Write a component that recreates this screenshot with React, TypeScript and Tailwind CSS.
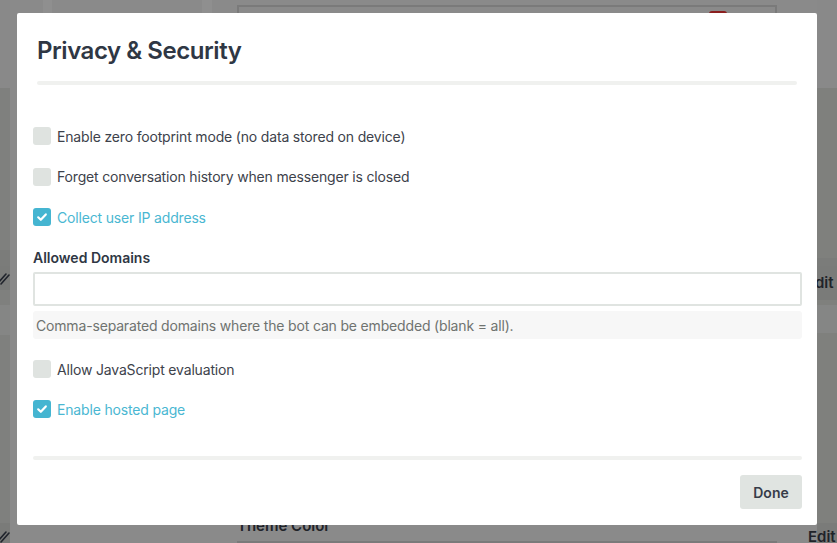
import React from 'react'

type Row = { label: string; checked: boolean }

const TOP_ROWS: Row[] = [
  { label: 'Enable zero footprint mode (no data stored on device)', checked: false },
  { label: 'Forget conversation history when messenger is closed', checked: false },
  { label: 'Collect user IP address', checked: true },
]

const BOTTOM_ROWS: Row[] = [
  { label: 'Allow JavaScript evaluation', checked: false },
  { label: 'Enable hosted page', checked: true },
]

function CheckRow({ label, checked }: Row) {
  return (
    <label className="flex items-center h-5 gap-[6px] cursor-pointer select-none">
      <span
        className={
          checked
            ? 'w-[18px] h-[18px] rounded-[3px] bg-[#45b5d1] flex items-center justify-center'
            : 'w-[18px] h-[18px] rounded-[3px] bg-[#dfe3e0]'
        }
      >
        {checked && (
          <svg width="12" height="12" viewBox="0 0 12 12" fill="none">
            <path d="M2.2 6.3 4.8 8.8 9.8 3.4" stroke="white" strokeWidth="2.2" strokeLinecap="round" strokeLinejoin="round" />
          </svg>
        )}
      </span>
      <span
        className={
          checked
            ? 'text-[14px] tracking-[-0.17px] text-[#4ab7d2]'
            : 'text-[14px] tracking-[-0.17px] text-[#3d424b]'
        }
      >
        {label}
      </span>
    </label>
  )
}

function Pencil() {
  return (
    <svg width="10" height="14" viewBox="0 0 10 14" fill="none">
      <path d="M-2 12 6 3M1 13 9 4" stroke="#20242c" strokeWidth="1.6" strokeLinecap="round" />
    </svg>
  )
}

// dimmed page behind the dialog
function Backdrop() {
  return (
    <div className="flex w-full h-full">
      {/* left table edge */}
      <div className="w-[10px] flex flex-col">
        <div className="h-[88px] bg-[#898989]" />
        <div className="h-[162px] bg-[#7f807e]" />
        <div className="h-[16px] bg-[#7b7c7a]" />
        <div className="h-[24px] bg-[#7a7b79] flex items-center overflow-hidden">
          <Pencil />
        </div>
        <div className="h-[15px] bg-[#7f807e]" />
        <div className="h-[30px] bg-[#858685]" />
        <div className="h-[188px] bg-[#7f807e]" />
        <div className="flex-1 bg-[#7a7b79] flex items-end overflow-hidden">
          <Pencil />
        </div>
      </div>

      {/* page body */}
      <div className="flex-1 flex">
        <div className="w-[33px]" />
        <div className="w-[9px] h-[88px] bg-[#8f8f8f]" />
        <div className="w-[150px]" />
        <div className="w-[10px] h-[88px] bg-[#8f8f8f]" />
        <div className="w-[25px]" />
        <div className="w-[540px] flex flex-col">
          <div className="mt-[5px] h-[30px] border-2 border-b-0 border-[#7a7a7a] flex justify-end pr-[48px]">
            <div className="mt-[4px] w-[18px] h-[6px] rounded-t-[3px] bg-[#8b1e1e]" />
          </div>
          <div className="flex-1" />
          <div className="text-[15px] font-semibold text-[#1f2329] leading-none mb-[8px]">Theme Color</div>
          <div className="h-[2px] bg-[#7a7a7a]" />
        </div>
        <div className="flex-1" />
      </div>

      {/* right table edge */}
      <div className="w-[20px] flex flex-col">
        <div className="h-[88px] bg-[#898989]" />
        <div className="h-[170px] bg-[#7f807d]" />
        <div className="h-[8px] bg-[#7b7c7a]" />
        <div className="h-[34px] bg-[#7a7b79] flex items-center text-[15px] font-semibold text-[#1f2329] overflow-hidden whitespace-nowrap">
          <span className="-ml-[2px]">dit</span>
        </div>
        <div className="h-[5px] bg-[#7f807d]" />
        <div className="h-[28px] bg-[#858685]" />
        <div className="h-[190px] bg-[#7f807d]" />
        <div className="flex-1 bg-[#7a7b79] flex items-end text-[15px] font-semibold text-[#1f2329] whitespace-nowrap">
          <span className="-ml-[9px] -mb-[4px] leading-5">Edit</span>
        </div>
      </div>
    </div>
  )
}

export default function App() {
  return (
    <div
      className="relative w-[837px] h-[543px] overflow-hidden bg-[#8a8a8a]"
      style={{ fontFamily: 'Inter, "Noto Sans", sans-serif' }}
    >
      <Backdrop />

      <div className="absolute left-[17px] top-[13px] w-[800px] h-[512px] bg-white rounded-[2px] flex flex-col">
        {/* Header */}
        <div className="px-5 pt-[22px]">
          <h2 className="text-[24px] leading-8 font-semibold text-[#2f3744] tracking-[-0.45px]">Privacy &amp; Security</h2>
          <div className="mt-[14px] h-[4px] rounded-full bg-[#f0f1ef]" />
        </div>

        {/* Body */}
        <div className="pl-4 pr-[15px] flex flex-col">
          <div className="mt-[41px] flex flex-col gap-[20.5px]">
            {TOP_ROWS.map((r) => (
              <CheckRow key={r.label} {...r} />
            ))}
          </div>

          <div className="mt-[20px] h-5 flex items-center text-[14px] font-semibold text-[#2f3744]">Allowed Domains</div>
          <input
            type="text"
            className="mt-[5px] h-[34px] w-full border-2 border-[#e0e4e1] rounded-[2px] px-2 text-[14px] outline-none"
          />
          <div className="mt-[5px] h-[28px] rounded-[3px] bg-[#f7f7f7] px-[3px] flex items-center text-[14px] tracking-[-0.17px] text-[#6f7370]">
            Comma-separated domains where the bot can be embedded (blank = all).
          </div>

          <div className="mt-[20px] flex flex-col gap-[20px]">
            {BOTTOM_ROWS.map((r) => (
              <CheckRow key={r.label} {...r} />
            ))}
          </div>

          <div className="mt-[37px] h-[4px] rounded-full bg-[#f0f1ef]" />

          <div className="mt-[15px] flex justify-end">
            <button className="h-[34px] w-[62px] rounded-[3px] bg-[#e0e4e1] text-[14px] font-semibold text-[#363c48]">
              Done
            </button>
          </div>
        </div>
      </div>
    </div>
  )
}
